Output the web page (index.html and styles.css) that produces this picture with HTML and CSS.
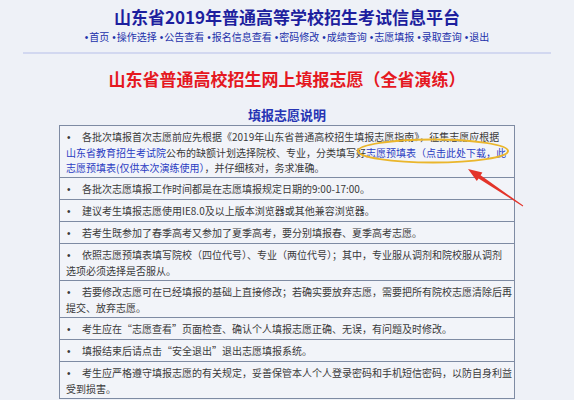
FILE: index.html
```html
<!DOCTYPE html>
<html lang="zh-CN">
<head>
<meta charset="utf-8">
<title>山东省2019年普通高等学校招生考试信息平台</title>
<link rel="stylesheet" href="styles.css">
</head>
<body>
<div class="page">
  <header class="top">
    <h1 class="site">山东省2019年普通高等学校招生考试信息平台</h1>
    <nav class="nav">
      <a class="ni">首页</a>
      <a class="ni">操作选择</a>
      <a class="ni">公告查看</a>
      <a class="ni">报名信息查看</a>
      <a class="ni">密码修改</a>
      <a class="ni">成绩查询</a>
      <a class="ni">志愿填报</a>
      <a class="ni">录取查询</a>
      <a class="ni">退出</a>
    </nav>
    <div class="rule"></div>
  </header>

  <h2 class="title">山东省普通高校招生网上填报志愿（全省演练）</h2>
  <h3 class="sub">填报志愿说明</h3>

  <table class="notes">
    <tr><td><span class="dot">•</span>各批次填报首次志愿前应先根据《2019年山东省普通高校招生填报志愿指南》，征集志愿应根据<br><a class="lk">山东省教育招生考试院</a>公布的缺额计划选择院校、专业，分类填写好<a class="lk">志愿预填表（点击此处下载，此<br>志愿预填表(仅供本次演练使用）</a>，并仔细核对，务求准确。</td></tr>
    <tr><td><span class="dot">•</span>各批次志愿填报工作时间都是在志愿填报规定日期的9:00-17:00。</td></tr>
    <tr><td><span class="dot">•</span>建议考生填报志愿使用IE8.0及以上版本浏览器或其他兼容浏览器。</td></tr>
    <tr><td><span class="dot">•</span>若考生既参加了春季高考又参加了夏季高考，要分别填报春、夏季高考志愿。</td></tr>
    <tr><td><span class="dot">•</span>依照志愿预填表填写院校（四位代号）、专业（两位代号）；其中，专业服从调剂和院校服从调剂<br>选项必须选择是否服从。</td></tr>
    <tr><td><span class="dot">•</span>若要修改志愿可在已经填报的基础上直接修改；若确实要放弃志愿，需要把所有院校志愿清除后再<br>提交、放弃志愿。</td></tr>
    <tr><td><span class="dot">•</span>考生应在“志愿查看”页面检查、确认个人填报志愿正确、无误，有问题及时修改。</td></tr>
    <tr><td><span class="dot">•</span>填报结束后请点击“安全退出”退出志愿填报系统。</td></tr>
    <tr><td><span class="dot">•</span>考生应严格遵守填报志愿的有关规定，妥善保管本人个人登录密码和手机短信密码，以防自身利益<br>受到损害。</td></tr>
  </table>

  <svg class="overlay" width="574" height="400" viewBox="0 0 574 400" aria-hidden="true">
    <ellipse cx="433" cy="151" rx="75" ry="11.5" fill="none" stroke="#eab62c" stroke-width="2"/>
    <polygon points="468,169 482.4,172.6 480.6,175.2 523.2,205.6 522.8,206.4 478.6,178.4 476.8,181" fill="#e3342a"/>
  </svg>
</div>
</body>
</html>
```

FILE: styles.css
```css
html, body {
  margin: 0;
  padding: 0;
  background: #eef1f7;
}

.page {
  position: relative;
  width: 574px;
  height: 400px;
  overflow: hidden;
  font-family: "Noto Sans CJK SC", "Noto Sans", sans-serif;
  color: #3a3a3a;
}

.top {
  display: flex;
  flex-direction: column;
  align-items: center;
}

.site {
  margin: 6px 0 0;
  font-size: 17px;
  line-height: 22px;
  font-weight: 700;
  color: #1d1f9e;
}

.nav {
  margin-top: 2px;
  font-size: 10px;
  line-height: 14px;
  color: #2230aa;
  display: flex;
  gap: 3px;
}

.ni {
  color: #2230aa;
  text-decoration: none;
}

.ni::before {
  content: "•";
  font-family: "Liberation Sans", sans-serif;
  margin-right: 1px;
}

.rule {
  margin-top: 7px;
  width: 528px;
  height: 2px;
  background: #d2d8f0;
}

.title {
  margin: 13px 0 0;
  text-align: center;
  font-size: 17px;
  line-height: 24px;
  font-weight: 700;
  color: #e5181f;
}

.sub {
  margin: 15px 0 0;
  text-align: center;
  font-size: 13px;
  line-height: 18px;
  font-weight: 700;
  color: #2634b4;
}

.notes {
  margin: 1px auto 0;
  width: 452px;
  border-collapse: collapse;
  background: #f2f4f9;
  border: 1px solid #7e8ba3;
}

.notes td {
  border-top: 1px solid #7e8ba3;
  padding: 3px 2px 2px 6px;
  font-size: 10px;
  line-height: 15px;
  color: #3a3a3a;
  white-space: nowrap;
}

.dot {
  display: inline-block;
  width: 15px;
  padding-left: 1px;
  font-family: "Liberation Sans", sans-serif;
}

.lk {
  color: #2a3cc2;
  text-decoration: none;
}

.overlay {
  position: absolute;
  left: 0;
  top: 0;
  pointer-events: none;
}
```
